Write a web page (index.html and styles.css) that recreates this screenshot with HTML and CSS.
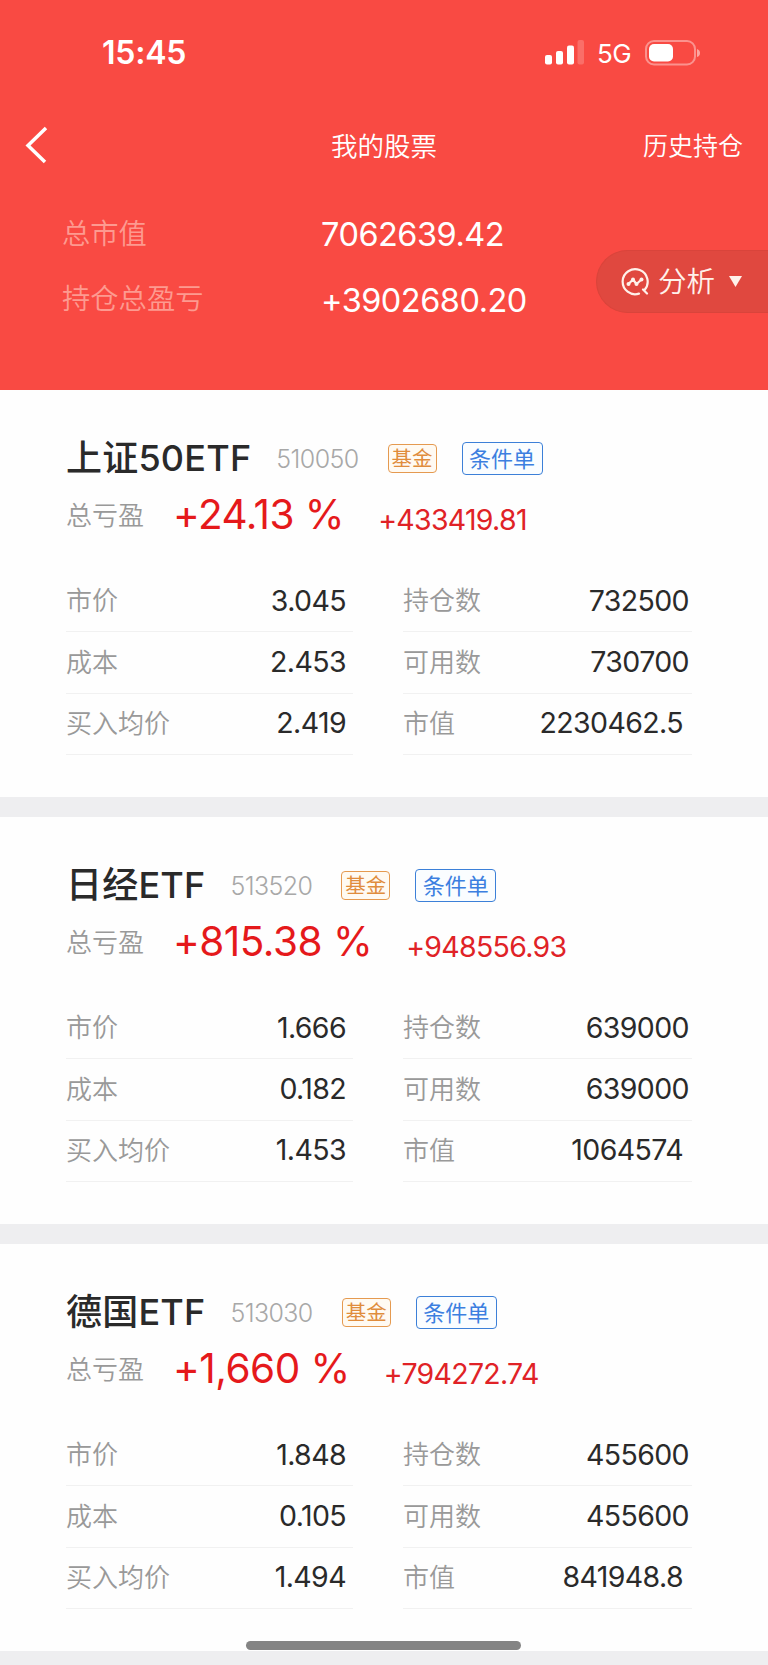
FILE: index.html
```html
<!DOCTYPE html>
<html lang="zh-CN">
	<head>
		<title>我的股票</title>
		<meta charset="utf-8">
		<link rel="stylesheet" href="styles.css">
	</head>
	<body>
		<header>
			<div class="status">
				<span class="time">15:45</span>
				<svg class="signal" width="40" height="26" viewBox="0 0 40 26" fill="#fff">
					<rect x="0" y="15" width="7" height="9.500" rx="2"/>
					<rect x="11" y="11" width="7" height="13.500" rx="2"/>
					<rect x="22" y="5.500" width="7" height="19" rx="2"/>
					<rect x="32.500" y="0" width="6.500" height="24.500" rx="2" opacity=".2"/>
				</svg>
				<span class="network">5G</span>
				<svg class="battery" width="56" height="26" viewBox="0 0 56 26">
					<rect x="1" y="1" width="49" height="23.500" rx="8" fill="none" stroke="#fff" stroke-width="2" opacity=".4"/>
					<rect x="4" y="4" width="24" height="17.500" rx="5" fill="#fff"/>
					<path d="M52 9q3 1 3 4t-3 4z" fill="#fff" opacity=".5"/>
				</svg>
			</div>
			<nav>
				<svg class="back" width="24" height="38" viewBox="0 0 24 38" fill="none" stroke="#fff" stroke-width="3.500">
					<path d="M22 2L4 19.500L21 36"/>
				</svg>
				<h1>我的股票</h1>
				<a class="history">历史持仓</a>
			</nav>
			<dl class="summary">
				<dt>总市值</dt><dd>7062639.42</dd>
				<dt>持仓总盈亏</dt><dd>+3902680.20</dd>
			</dl>
			<button class="analyse">
				<svg width="28" height="28" viewBox="0 0 28 28" fill="none" stroke="#fff1ea" stroke-width="2.200" stroke-linecap="round" stroke-linejoin="round">
					<path d="M23.500 22A12.500 12.500 0 1 0 18 25.600M22 21.500L26 25.500"/>
					<path d="M7.500 16L12 11.500L15.500 16L20.500 11.500"/>
					<g fill="#fff1ea" stroke="none">
						<circle cx="7.500" cy="16" r="2"/>
						<circle cx="12" cy="11.500" r="2"/>
						<circle cx="15.500" cy="16" r="2"/>
						<circle cx="20.500" cy="11.500" r="2"/>
					</g>
				</svg>
				<span>分析</span>
				<svg class="caret" width="13" height="11" viewBox="0 0 13 11" fill="#fff1ea"><path d="M0 0H13L6.500 11z"/></svg>
			</button>
		</header>
		<main>
			<section class="stock">
				<div class="title">
					<h2>上证50ETF</h2>
					<span class="code">510050</span>
					<span class="tag fund">基金</span>
					<span class="tag order">条件单</span>
				</div>
				<div class="profit">
					<label>总亏盈</label>
					<strong>+24.13 %</strong>
					<span>+433419.81</span>
				</div>
				<div class="figures">
					<dl>
						<div><dt>市价</dt><dd>3.045</dd></div>
						<div><dt>成本</dt><dd>2.453</dd></div>
						<div><dt>买入均价</dt><dd>2.419</dd></div>
					</dl>
					<dl>
						<div><dt>持仓数</dt><dd>732500</dd></div>
						<div><dt>可用数</dt><dd>730700</dd></div>
						<div><dt>市值</dt><dd class="worth">2230462.5</dd></div>
					</dl>
				</div>
			</section>
			<section class="stock">
				<div class="title">
					<h2>日经ETF</h2>
					<span class="code">513520</span>
					<span class="tag fund">基金</span>
					<span class="tag order">条件单</span>
				</div>
				<div class="profit">
					<label>总亏盈</label>
					<strong>+815.38 %</strong>
					<span>+948556.93</span>
				</div>
				<div class="figures">
					<dl>
						<div><dt>市价</dt><dd>1.666</dd></div>
						<div><dt>成本</dt><dd>0.182</dd></div>
						<div><dt>买入均价</dt><dd>1.453</dd></div>
					</dl>
					<dl>
						<div><dt>持仓数</dt><dd>639000</dd></div>
						<div><dt>可用数</dt><dd>639000</dd></div>
						<div><dt>市值</dt><dd class="worth">1064574</dd></div>
					</dl>
				</div>
			</section>
			<section class="stock">
				<div class="title">
					<h2>德国ETF</h2>
					<span class="code">513030</span>
					<span class="tag fund">基金</span>
					<span class="tag order">条件单</span>
				</div>
				<div class="profit">
					<label>总亏盈</label>
					<strong>+1,660 %</strong>
					<span>+794272.74</span>
				</div>
				<div class="figures">
					<dl>
						<div><dt>市价</dt><dd>1.848</dd></div>
						<div><dt>成本</dt><dd>0.105</dd></div>
						<div><dt>买入均价</dt><dd>1.494</dd></div>
					</dl>
					<dl>
						<div><dt>持仓数</dt><dd>455600</dd></div>
						<div><dt>可用数</dt><dd>455600</dd></div>
						<div><dt>市值</dt><dd class="worth">841948.8</dd></div>
					</dl>
				</div>
			</section>
		</main>
		<div class="home-bar"></div>
	</body>
</html>
```
FILE: styles.css
```css
html,body{
	margin:0;
}

*{
	box-sizing:border-box;
}

body{
	position:relative;
	height:1665px;
	overflow:hidden;
	background:#eeeef0;
	font-family:Inter,"Noto Sans CJK SC",sans-serif;
	color:#2a2a2a;
}

h1,h2,dl,dd{
	margin:0;
	font-weight:normal;
}

header{
	position:relative;
	height:390px;
	background:#f94a43;
	color:#fff;
}

.status{
	display:flex;
	align-items:center;
	height:105px;
	padding:0 67px 0 102px;
}
.time{
	flex:1;
	font-size:32px;
	font-weight:600;
	letter-spacing:-.2px;
}
.signal{
	margin-right:12px;
}
.network{
	width:48px;
	padding-top:1px;
	font-size:26px;
	letter-spacing:-.5px;
}

nav{
	display:grid;
	grid-template-columns:1fr auto 1fr;
	align-items:center;
	height:80px;
	padding:0 25px 0 24px;
}
h1{
	padding:0 0 2px 1px;
	font-size:26.500px;
	font-weight:350;
}
.history{
	justify-self:end;
	padding-bottom:2px;
	font-size:25px;
	font-weight:350;
}

.summary{
	display:grid;
	grid-template-columns:259px 1fr;
	grid-auto-rows:65.500px;
	align-items:center;
	padding:15px 0 0 62px;
}
.summary dt{
	padding-bottom:3px;
	font-size:28.300px;
	font-weight:350;
	color:#fd9a90;
}
.summary dd{
	padding-top:4px;
	font-size:32.500px;
	font-weight:400;
	letter-spacing:-.5px;
}

.analyse{
	position:absolute;
	top:250px;
	right:0;
	display:flex;
	align-items:center;
	width:172px;
	height:63px;
	padding:0 0 0 24px;
	border:1px solid #d9443b;
	border-right:0;
	border-radius:32px 0 0 32px;
	background:#e0483f;
	font:350 28.500px Inter,"Noto Sans CJK SC",sans-serif;
	color:#fff1ea;
}
.analyse span{
	margin:0 14px 0 9px;
	padding-bottom:4px;
}

.stock{
	height:407px;
	margin-bottom:20px;
	padding:37px 76px 0 66px;
	background:#fefefe;
}

.title{
	display:flex;
	align-items:center;
	height:62px;
}
h2{
	padding-bottom:6px;
	font-size:36px;
	font-weight:500;
	letter-spacing:.2px;
	white-space:nowrap;
}
.code{
	margin:0 29px 0 25px;
	padding-top:2px;
	font-size:25px;
	font-weight:300;
	letter-spacing:-.6px;
	color:#a8a8a8;
}
.tag{
	display:flex;
	align-items:center;
	justify-content:center;
	border-radius:4px;
	padding-bottom:2px;
}
.fund{
	width:49px;
	height:29px;
	margin-right:25px;
	border:1px solid #e59a50;
	background:#fffaf2;
	font-size:20.500px;
	color:#e08c3c;
}
.order{
	width:81px;
	height:33px;
	border:1px solid #3c80d8;
	background:#fafdff;
	font-size:22px;
	color:#3c7fe0;
}

.profit{
	display:flex;
	align-items:center;
	height:50px;
	padding-top:2px;
}
.profit label{
	width:107px;
	padding-bottom:3px;
	font-size:26px;
	font-weight:350;
	color:#999;
}
.profit strong{
	margin:-2px 34px 0 0;
	font-size:40.500px;
	font-weight:400;
	letter-spacing:-.5px;
	color:#e5191b;
}
.profit span{
	padding-top:9px;
	font-size:28.500px;
	letter-spacing:-.7px;
	color:#e02226;
}

.figures{
	display:grid;
	grid-template-columns:287px 289px;
	gap:50px;
	padding-top:32px;
}
.figures div{
	display:flex;
	align-items:center;
	justify-content:space-between;
	height:61.400px;
	padding-right:7px;
	border-bottom:1px solid #f1f1f1;
}
.figures dl+dl div{
	padding-right:3px;
}
.figures dt{
	padding-bottom:5px;
	font-size:26px;
	font-weight:350;
	color:#999;
}
.figures dd{
	padding-bottom:2px;
	font-size:28.500px;
	letter-spacing:-.6px;
}
.figures .worth{
	padding-right:6px;
}

.home-bar{
	position:absolute;
	left:246px;
	bottom:15px;
	width:275px;
	height:9px;
	border-radius:5px;
	background:#848484;
}
```
